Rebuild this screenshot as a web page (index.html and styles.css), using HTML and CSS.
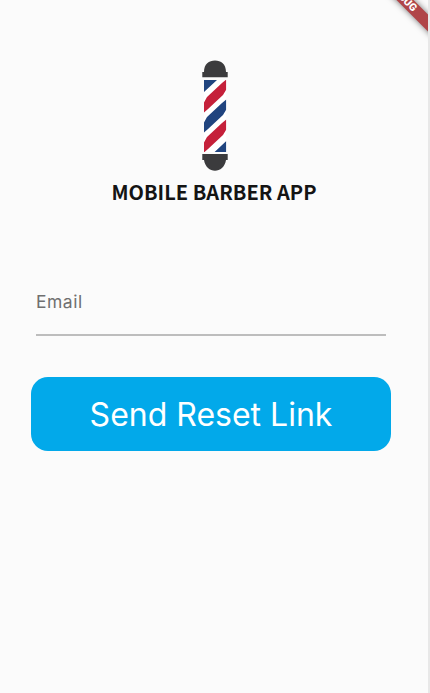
FILE: index.html
```html
<!DOCTYPE html>
<html lang="en">
<head>
<meta charset="utf-8">
<title>Mobile Barber App</title>
<link rel="stylesheet" href="styles.css">
</head>
<body>
<main class="screen">
  <header class="brand">
    <svg class="pole" viewBox="0 0 26 111" aria-hidden="true">
      <defs><clipPath id="tube"><rect x="2" y="20" width="22.3" height="72"/></clipPath></defs>
      <path class="cap" d="M2 12C2 4 7 .5 13 .5S24 4 24 12H25.7V17.2H.3V12Z"/>
      <rect class="tube" x="2" y="20" width="22.3" height="72"/>
      <g clip-path="url(#tube)">
        <path class="blue" d="M2 20H15L2 32Z M2 62.500L5 57L20 43L24.300 39.500V49.500L21 55L6 69L2 72.500Z M2 102L24.300 81V93H2Z"/>
        <path class="red" d="M2 42.500L5 37L20 23L24.300 19.500V29.500L21 35L6 49L2 52.500Z M2 82.500L5 77L20 63L24.300 59.500V69.500L21 75L6 89L2 92.500Z"/>
      </g>
      <path class="cap" d="M.3 94H25.700V100H24C23 107 18 110.700 13 110.700S3 107 2 100H.3Z"/>
    </svg>
    <h1 class="title">MOBILE BARBER APP</h1>
  </header>
  <form class="form">
    <label class="field"><span class="label">Email</span></label>
    <button class="submit" type="button"><span class="submit-text">Send Reset Link</span></button>
  </form>
  <div class="banner"><span>DEBUG</span></div>
</main>
</body>
</html>
```
FILE: styles.css
```css
* { box-sizing: border-box; }
body { margin: 0; background: #e8e8e8; }
.screen {
  position: relative;
  width: 428px;
  height: 693px;
  overflow: hidden;
  background: #fbfbfb;
}
.brand {
  display: flex;
  flex-direction: column;
  align-items: center;
  padding-top: 60px;
}
.pole { width: 26px; height: 111px; margin-left: 2px; }
.cap { fill: #3b3b3d; }
.tube { fill: #fff; }
.blue { fill: #20447f; }
.red { fill: #c5203a; }
.title {
  margin: 6px 0 0;
  font: bold 20px/30px "Noto Sans CJK SC", sans-serif;
  letter-spacing: .02px;
  color: #141414;
  white-space: nowrap;
}
.form {
  display: flex;
  flex-direction: column;
  padding: 83px 37px 0 31px;
}
.field {
  height: 46px;
  margin: 0 5px;
  border-bottom: 2px solid #bdbdbd;
}
.label {
  display: block;
  font: 17.5px/24px Inter, sans-serif;
  letter-spacing: .5px;
  color: #6f6f6f;
}
.submit {
  height: 74px;
  margin-top: 41px;
  padding: 0;
  border: 0;
  border-radius: 17px;
  background: #02a9ea;
  color: #fff;
  font: 32px/74px Inter, sans-serif;
}
.submit-text { position: relative; top: 1px; }
.banner {
  position: absolute;
  left: 353px;
  top: -8px;
  width: 100px;
  height: 12px;
  background: #b04548;
  box-shadow: 0 0 6px rgba(0, 0, 0, .55);
  transform: rotate(45deg);
  color: #fff;
  font: 900 10.5px/12px Roboto, sans-serif;
  text-align: center;
}
```
